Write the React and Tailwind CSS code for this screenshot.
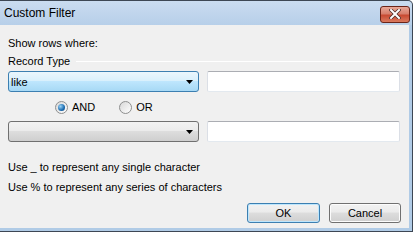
import React from 'react';

const Arrow = () => (
  <svg width="7" height="4" viewBox="0 0 7 4" className="shrink-0">
    <path d="M0 0H7L3.5 4Z" fill="#000" />
  </svg>
);

const Combo = ({ value, hot }) => (
  <div
    className={
      hot
        ? 'w-[191px] h-[21px] rounded-[3px] border border-[#3c7fb1] bg-[linear-gradient(to_bottom,#eaf6fd_0%,#d9f0fc_45%,#bee6fd_50%,#a7d9f5_100%)] flex items-center justify-between pl-[2px] pr-[5px]'
        : 'w-[191px] h-[21px] rounded-[3px] border border-[#707070] bg-[linear-gradient(to_bottom,#f2f2f2_0%,#ebebeb_45%,#dddddd_50%,#cfcfcf_100%)] flex items-center justify-between pl-[2px] pr-[5px]'
    }
  >
    <span>{value}</span>
    <Arrow />
  </div>
);

const TextBox = () => (
  <div className="w-[193px] h-[21px] rounded-[2px] bg-white border border-[#dbdfe6] border-t-[#abadb3] border-b-[#e3e9ef]" />
);

const Radio = ({ checked, label }) => (
  <label className="flex items-center gap-[4px]">
    <span className="w-[13px] h-[13px] rounded-full border border-[#8e8f8f] bg-[linear-gradient(135deg,#d8d8d8,#ffffff)] flex items-center justify-center">
      {checked && (
        <span className="w-[7px] h-[7px] rounded-full bg-[radial-gradient(circle_at_35%_35%,#9bd3f6,#1a6bb0_60%,#0d3f73)]" />
      )}
    </span>
    <span>{label}</span>
  </label>
);

const Button = ({ children, isDefault }) => (
  <button
    className={
      isDefault
        ? 'w-[73px] h-[20px] rounded-[3px] border border-[#3c7fb1] shadow-[inset_0_0_0_1px_#bde6fd] bg-[linear-gradient(to_bottom,#f2f2f2_0%,#ebebeb_45%,#dddddd_50%,#cfcfcf_100%)] text-[11px]'
        : 'w-[72px] h-[20px] rounded-[3px] border border-[#707070] shadow-[inset_0_0_0_1px_#fcfcfc] bg-[linear-gradient(to_bottom,#f2f2f2_0%,#ebebeb_45%,#dddddd_50%,#cfcfcf_100%)] text-[11px]'
    }
  >
    {children}
  </button>
);

export default function App() {
  return (
    <div className="w-[416px] h-[234px] bg-white font-['Liberation_Sans',Arial,sans-serif] text-[11px] text-black overflow-hidden">
      <div className="w-[413px] h-[232px] flex flex-col bg-[#b0cbe6] border-t border-r border-b border-[#3d4754] rounded-tr-[5px]">
        {/* title bar */}
        <div className="h-[24px] shrink-0 flex items-center justify-between pl-[4px] pr-[2px] bg-[linear-gradient(to_bottom,#cadcf0,#b7cfe9)] rounded-tr-[5px]">
          <span className="text-[12px] leading-none">Custom Filter</span>
          <button className="w-[30px] h-[17px] mt-[2px] rounded-[3px] border border-[#6b2418] bg-[linear-gradient(to_bottom,#e8a898_0%,#d77f6c_45%,#c84a32_55%,#d97a5e_100%)] flex items-center justify-center">
            <svg width="12" height="10" viewBox="0 0 12 10">
              <path d="M2 1L10 9M10 1L2 9" stroke="#4a2a25" strokeWidth="3.4" strokeLinecap="square" />
              <path d="M2 1L10 9M10 1L2 9" stroke="#fff" strokeWidth="2" strokeLinecap="square" />
            </svg>
          </button>
        </div>

        {/* body */}
        <div className="flex-1 mr-[3px] mb-[3px] bg-[#f0f0f0] pl-[8px] pr-[8px] pt-[11px] flex flex-col leading-[14px]">
          <div>Show rows where:</div>
          <div className="mt-[4px] flex items-center gap-[6px]">
            <span>Record Type</span>
            <div className="flex-1 h-px bg-[#a0a0a0] border-b border-white" />
          </div>

          <div className="mt-[3px] flex gap-[8px]">
            <Combo value="like" hot />
            <TextBox />
          </div>

          <div className="mt-[8px] flex items-center gap-[24px] pl-[47px]">
            <Radio checked label="AND" />
            <Radio label="OR" />
          </div>

          <div className="mt-[7px] flex gap-[8px]">
            <Combo value="" />
            <TextBox />
          </div>

          <div className="mt-[18px]">Use _ to represent any single character</div>
          <div className="mt-[6px]">Use % to represent any series of characters</div>

          <div className="mt-[9px] flex justify-end gap-[9px] pr-[-1px]">
            <Button isDefault>OK</Button>
            <Button>Cancel</Button>
          </div>
        </div>
      </div>
    </div>
  );
}
